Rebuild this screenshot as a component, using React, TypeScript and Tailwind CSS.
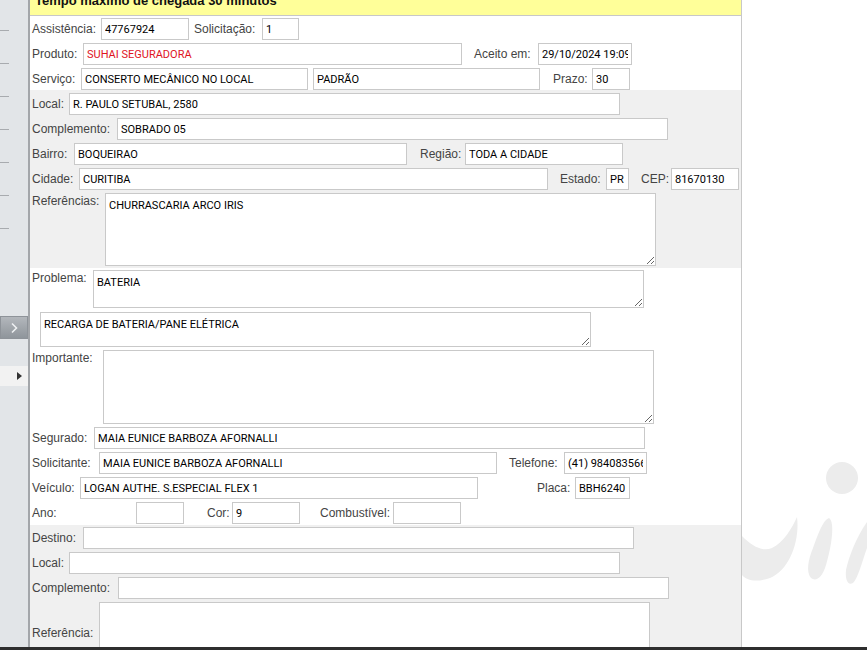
import * as React from "react";

const labelFont = { fontFamily: '"Liberation Sans", Arial, sans-serif' };

function Lbl({ w, ml = 0, children, top }: { w: number; ml?: number; children: React.ReactNode; top?: boolean }) {
  return (
    <div
      className={"shrink-0 text-[12px] leading-[14px] text-[#444] " + (top ? "self-start pt-[1px]" : "")}
      style={{ ...labelFont, width: w, marginLeft: ml }}
    >
      {children}
    </div>
  );
}

function Inp({ w, ml = 0, value = "", red }: { w: number; ml?: number; value?: string; red?: boolean }) {
  return (
    <input
      readOnly
      defaultValue={value}
      className={
        "h-[22px] shrink-0 border border-[#c9c9c9] bg-white px-[3px] text-[11px] outline-none " +
        (red ? "text-[#e0141e]" : "text-black")
      }
      style={{ width: w, marginLeft: ml, fontFamily: "Roboto, sans-serif" }}
    />
  );
}

function Area({ w, h, ml = 0, value = "" }: { w: number; h: number; ml?: number; value?: string }) {
  return (
    <textarea
      readOnly
      defaultValue={value}
      className="shrink-0 border border-[#c9c9c9] bg-white px-[3px] pt-[5px] text-[11px] leading-[14px] text-black outline-none"
      style={{ width: w, height: h, marginLeft: ml, fontFamily: "Roboto, sans-serif" }}
    />
  );
}

function Row({ children, className = "" }: { children: React.ReactNode; className?: string }) {
  return <div className={"flex h-[22px] items-center pl-[2px] " + className}>{children}</div>;
}

function Sidebar() {
  return (
    <div className="flex w-[30px] shrink-0 flex-col border-r-2 border-[#a3a6aa] bg-[#e2e5e8]">
      <div className="flex flex-col gap-[32px] pt-[30px]">
        {[0, 1, 2, 3, 4, 5, 6].map((i) => (
          <div key={i} className="h-px w-[9px] bg-[#a8abaf]" />
        ))}
      </div>
      <div className="mt-[87px] flex h-[23px] w-[28px] items-center justify-center border border-[#8e9399] bg-gradient-to-b from-[#b3b7bc] to-[#8f959b]">
        <svg width="10" height="12" viewBox="0 0 10 12">
          <path d="M3 1.5 L7.5 6 L3 10.5" fill="none" stroke="#eef0f2" strokeWidth="1.6" />
        </svg>
      </div>
      <div className="mt-[27px] flex h-[20px] w-[28px] items-center justify-end bg-[#f2f2f2] pr-[6px]">
        <svg width="5" height="8" viewBox="0 0 5 8">
          <path d="M0 0 L5 4 L0 8 Z" fill="#333" />
        </svg>
      </div>
    </div>
  );
}

function Watermark() {
  return (
    <svg className="absolute left-[742px] top-[455px]" width="125" height="135" viewBox="742 455 125 135">
      <g fill="#ececec">
        <circle cx="842" cy="478" r="16" />
        <path d="M742 536 C752 546 762 552 772 548 C784 542 792 528 797 517 C800 540 790 570 770 578 C756 583 746 580 742 575 Z" />
        <path d="M829 518 C835 522 832 545 826 565 C822 578 816 582 811 578 C806 572 808 560 813 548 C818 534 823 520 829 518 Z" />
        <path d="M867 522 L867 548 C862 562 858 578 853 583 C848 586 845 580 846 570 C849 556 856 538 867 522 Z" />
      </g>
    </svg>
  );
}

export default function App() {
  return (
    <div className="relative flex h-[650px] w-[867px] overflow-hidden bg-white">
      <Sidebar />
      <div className="flex w-[712px] shrink-0 flex-col border-r border-[#c8c8c8]">
        <div className="h-[16px] shrink-0 overflow-hidden border-b border-[#c8c8c8] bg-[#ffff99] pl-[5px]">
          <div
            className="mt-[-7px] text-[13px] font-bold leading-[15px] text-[#111]"
            style={{ fontFamily: '"Liberation Sans", Arial, sans-serif' }}
          >
            Tempo máximo de chegada 30 minutos
          </div>
        </div>

        <div className="flex flex-col gap-[3px] bg-white pt-[2px]">
          <Row>
            <Lbl w={69}>Assistência:</Lbl>
            <Inp w={88} value="47767924" />
            <Lbl w={68} ml={5}>Solicitação:</Lbl>
            <Inp w={37} value="1" />
          </Row>
          <Row>
            <Lbl w={51}>Produto:</Lbl>
            <Inp w={379} value="SUHAI SEGURADORA" red />
            <Lbl w={64} ml={12}>Aceito em:</Lbl>
            <Inp w={94} value="29/10/2024 19:09" />
          </Row>
          <Row>
            <Lbl w={49}>Serviço:</Lbl>
            <Inp w={227} value="CONSERTO MECÂNICO NO LOCAL" />
            <Inp w={227} ml={5} value="PADRÃO" />
            <Lbl w={39} ml={13}>Prazo:</Lbl>
            <Inp w={38} value="30" />
          </Row>
        </div>

        <div className="flex flex-col gap-[3px] bg-[#f0f0f0] pb-[2px] pt-[3px]">
          <Row>
            <Lbl w={37}>Local:</Lbl>
            <Inp w={551} value="R. PAULO SETUBAL, 2580" />
          </Row>
          <Row>
            <Lbl w={85}>Complemento:</Lbl>
            <Inp w={551} value="SOBRADO 05" />
          </Row>
          <Row>
            <Lbl w={42}>Bairro:</Lbl>
            <Inp w={333} value="BOQUEIRAO" />
            <Lbl w={45} ml={13}>Região:</Lbl>
            <Inp w={158} value="TODA A CIDADE" />
          </Row>
          <Row>
            <Lbl w={47}>Cidade:</Lbl>
            <Inp w={469} value="CURITIBA" />
            <Lbl w={46} ml={12}>Estado:</Lbl>
            <Inp w={23} value="PR" />
            <Lbl w={30} ml={12}>CEP:</Lbl>
            <Inp w={68} value="81670130" />
          </Row>
          <div className="flex pl-[2px]">
            <Lbl w={73} top>Referências:</Lbl>
            <Area w={551} h={73} value="CHURRASCARIA ARCO IRIS" />
          </div>
        </div>

        <div className="flex flex-col bg-white pt-[2px]">
          <div className="flex pl-[2px]">
            <Lbl w={61} top>Problema:</Lbl>
            <Area w={551} h={38} value="BATERIA" />
          </div>
          <div className="mt-[4px] flex pl-[2px]">
            <Area w={551} h={35} ml={8} value="RECARGA DE BATERIA/PANE ELÉTRICA" />
          </div>
          <div className="mt-[3px] flex pl-[2px]">
            <Lbl w={71} top>Importante:</Lbl>
            <Area w={551} h={74} />
          </div>
          <div className="mt-[3px] flex flex-col gap-[3px]">
            <Row>
              <Lbl w={62}>Segurado:</Lbl>
              <Inp w={551} value="MAIA EUNICE BARBOZA AFORNALLI" />
            </Row>
            <Row>
              <Lbl w={67}>Solicitante:</Lbl>
              <Inp w={398} value="MAIA EUNICE BARBOZA AFORNALLI" />
              <Lbl w={55} ml={12}>Telefone:</Lbl>
              <Inp w={83} value="(41) 984083566" />
            </Row>
            <Row>
              <Lbl w={48}>Veículo:</Lbl>
              <Inp w={398} value="LOGAN AUTHE. S.ESPECIAL FLEX 1" />
              <Lbl w={38} ml={59}>Placa:</Lbl>
              <Inp w={55} value="BBH6240" />
            </Row>
            <Row>
              <Lbl w={104}>Ano:</Lbl>
              <Inp w={48} />
              <Lbl w={25} ml={23}>Cor:</Lbl>
              <Inp w={68} value="9" />
              <Lbl w={73} ml={20}>Combustível:</Lbl>
              <Inp w={68} />
            </Row>
          </div>
        </div>

        <div className="mt-px flex min-h-0 flex-1 flex-col gap-[3px] overflow-hidden bg-[#f0f0f0] pt-[2px]">
          <Row>
            <Lbl w={51}>Destino:</Lbl>
            <Inp w={551} />
          </Row>
          <Row>
            <Lbl w={37}>Local:</Lbl>
            <Inp w={551} />
          </Row>
          <Row>
            <Lbl w={86}>Complemento:</Lbl>
            <Inp w={551} />
          </Row>
          <div className="flex items-start pl-[2px]">
            <div className="flex h-[38px] items-end">
              <Lbl w={67}>Referência:</Lbl>
            </div>
            <Area w={551} h={74} />
          </div>
        </div>
      </div>
      <div className="flex-1" />
      <Watermark />
      <div className="absolute bottom-0 left-0 h-[3px] w-full bg-[#2e2e2e]" />
    </div>
  );
}
